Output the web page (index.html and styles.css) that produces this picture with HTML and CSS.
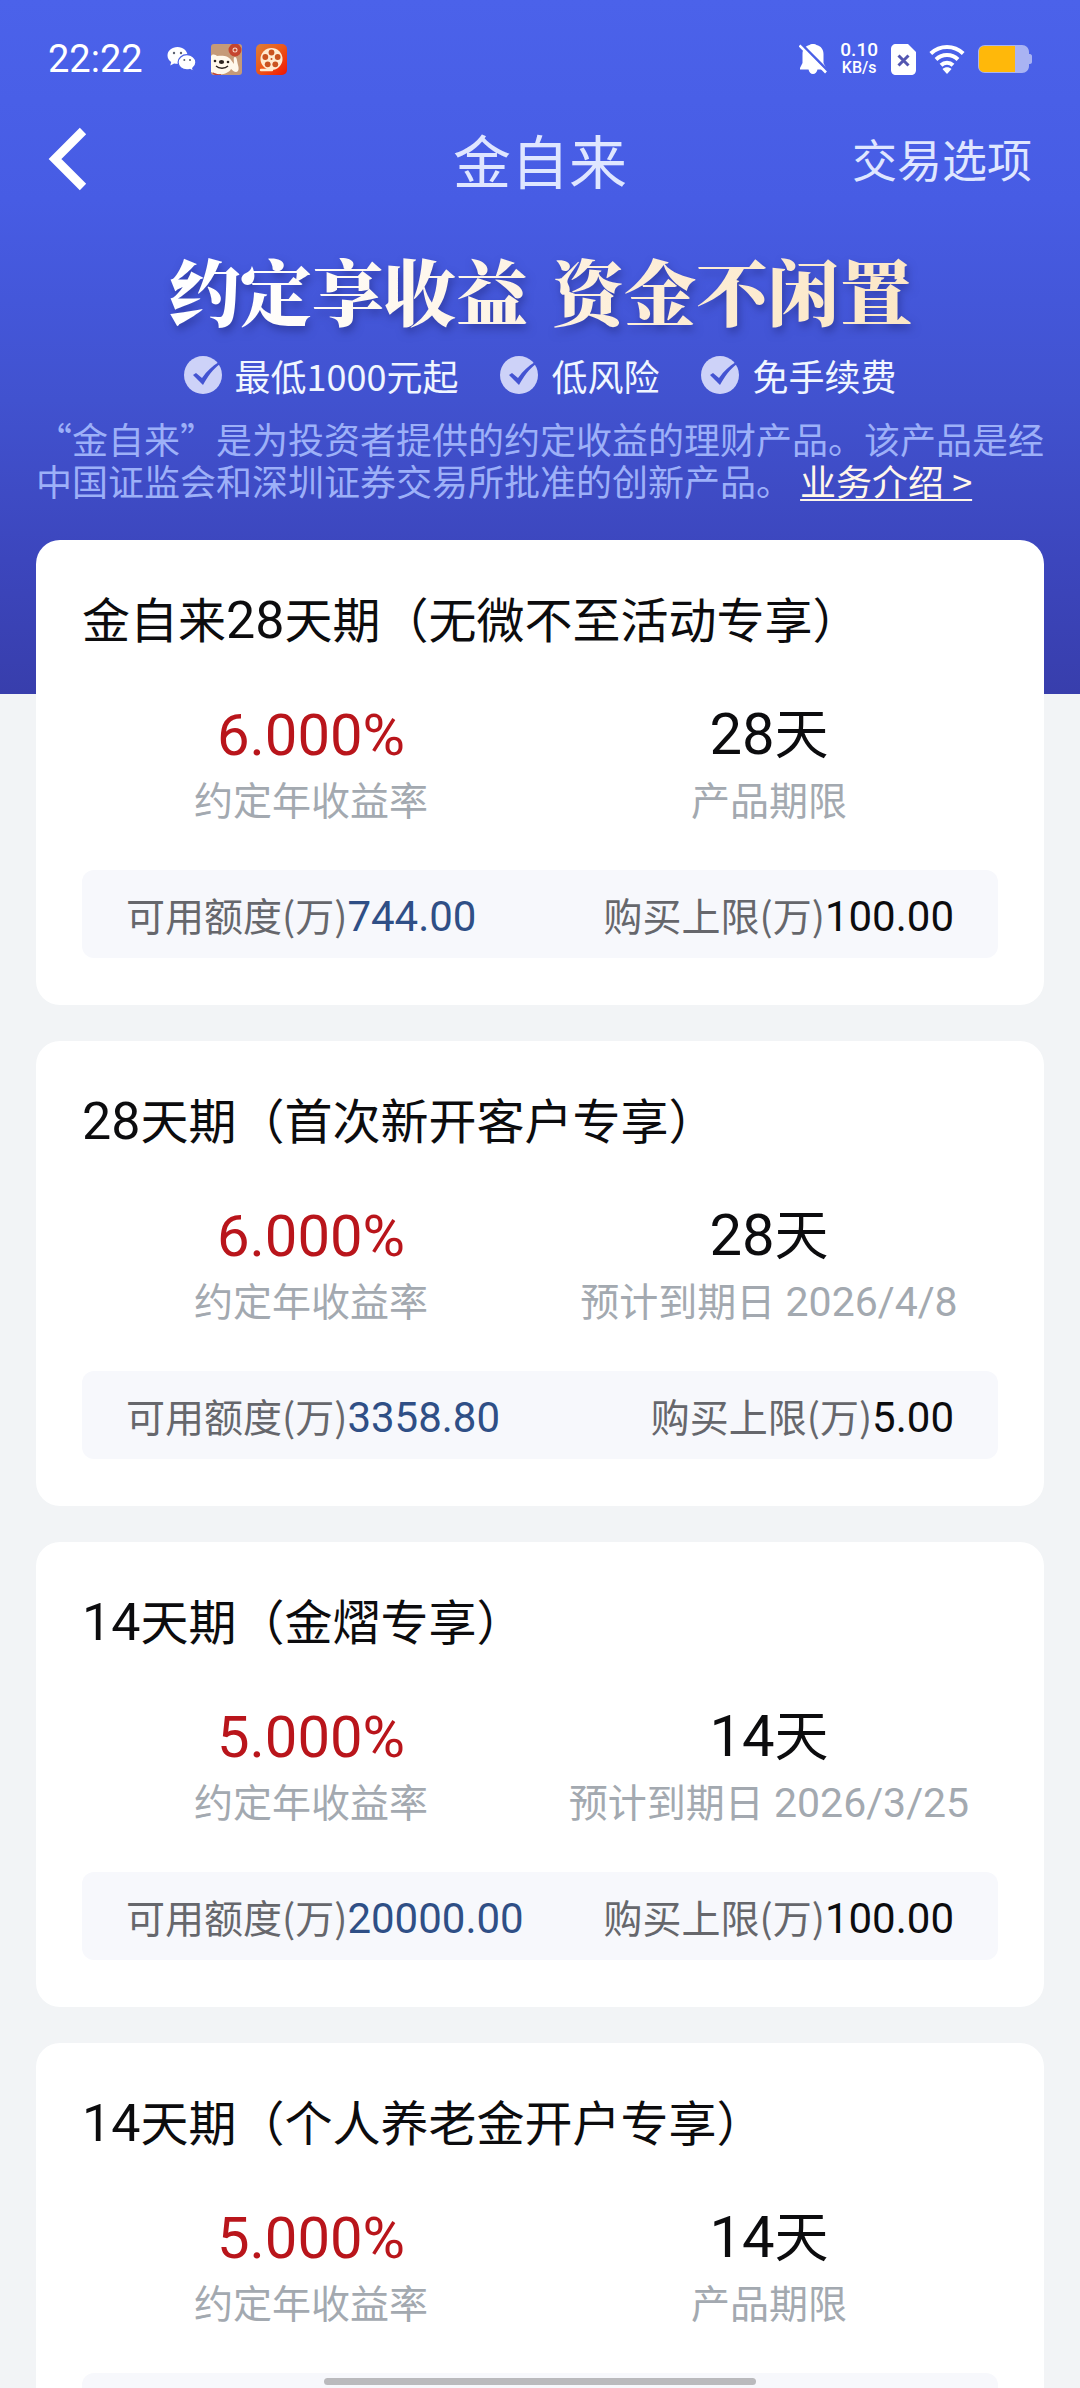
FILE: index.html
```html
<!DOCTYPE html>
<html lang="zh-CN">
<head>
<meta charset="utf-8">
<meta name="viewport" content="width=device-width, initial-scale=1">
<title>金自来</title>
<link rel="stylesheet" href="styles.css">
</head>
<body>
<div class="page">
  <div class="status">
    <span class="time">22:22</span>
    <div class="apps">
      <svg width="30" height="26" viewBox="0 0 30 26" aria-hidden="true">
        <path fill="#fff" d="M10.500 1C4.900 1 .5 4.700.5 9.400c0 2.700 1.500 5 3.700 6.500l-.9 3.600 3.800-2.100c1.100.3 2.200.4 3.400.4 5.600 0 10-3.800 10-8.400S16.100 1 10.500 1z"/>
        <path fill="#fff" stroke="#4a60e6" stroke-width="1.200" d="M20 8.700c-5 0-8.900 3.400-8.900 7.600s3.900 7.600 8.900 7.600c1 0 2-.1 2.900-.4l3.600 1.900-.8-3.100c2-1.400 3.200-3.600 3.200-6 0-4.200-3.900-7.600-8.900-7.600z"/>
        <g fill="#5c6270"><circle cx="7" cy="7" r="1.200"/><circle cx="14" cy="7" r="1.200"/><circle cx="17.300" cy="14" r="1"/><circle cx="23" cy="14" r="1"/></g>
      </svg>
      <svg width="31" height="31" viewBox="0 0 31 31" aria-hidden="true">
        <rect width="31" height="31" rx="3" fill="#c59a78"/>
        <path fill="#fff8ec" d="M0 12c2-3 5-1 6 0 6-1 12 0 14 4l3 4c0-4-1-7 1-7s2 4 3 8c1 3 1 7-2 7s-4-3-5-3c-2 4-8 6-14 5L0 28z"/>
        <g fill="#2a211e"><circle cx="4" cy="17" r="1.300"/><circle cx="17" cy="18" r="1.300"/><ellipse cx="10.500" cy="18" rx="2.600" ry="1.900"/></g>
        <path fill="none" stroke="#2a211e" stroke-width="1.300" d="M5 22c3 3 9 3 12 0"/>
        <path fill="none" stroke="#c0423a" stroke-width="1.500" d="M2 29c2 2 5 2 8 2"/>
        <circle cx="24" cy="6" r="4.500" fill="#fbd9c8" stroke="#c5452f" stroke-width="4"/>
        <circle cx="24" cy="6" r="1.500" fill="#c5452f"/>
      </svg>
      <svg width="31" height="31" viewBox="0 0 31 31" aria-hidden="true">
        <defs><linearGradient id="film" x1="0" y1="0" x2="1" y2="1"><stop offset="0" stop-color="#dd8038"/><stop offset=".5" stop-color="#ec5518"/><stop offset="1" stop-color="#f01404"/></linearGradient></defs>
        <rect width="31" height="31" rx="5" fill="url(#film)"/>
        <circle cx="15.500" cy="15" r="11" fill="#ffead0"/>
        <g fill="#c9521f"><circle cx="15.500" cy="8.500" r="2.900"/><circle cx="21.700" cy="13" r="2.900"/><circle cx="19.300" cy="20.300" r="2.900"/><circle cx="11.700" cy="20.300" r="2.900"/><circle cx="9.300" cy="13" r="2.900"/><circle cx="15.500" cy="15" r="1"/></g>
        <path d="M5 26h11" stroke="#ffead0" stroke-width="2.400" stroke-linecap="round"/>
      </svg>
    </div>
    <div class="system">
      <svg width="28" height="32" viewBox="0 0 28 32" aria-hidden="true">
        <path fill="#fff" d="M14 1c-1.700 0-2.700.4-3.500 1C6 3 3.500 6.500 3.500 11v9L1 25v1.500h8.500c.5 2.500 2.300 4.500 4.500 4.500s4-2 4.500-4.500H27V25l-2.500-5v-9c0-4.500-2.500-8-7-9-.8-.6-1.800-1-3.500-1z"/>
        <path stroke="#4a60e6" stroke-width="3" d="M2 1l27 27"/>
        <path stroke="#fff" stroke-width="2.600" d="M.5 2.500L27 29.500"/>
      </svg>
      <span class="speed"><span class="speed-value">0.10</span><span class="speed-unit">KB/s</span></span>
      <svg width="25" height="31" viewBox="0 0 25 31" aria-hidden="true">
        <path fill="#fff" d="M5 0h12l8 8v18c0 3-2 5-5 5H5c-3 0-5-2-5-5V5c0-3 2-5 5-5z"/>
        <path stroke="#5356b0" stroke-width="3" d="M7.500 11.500l10 10m0-10l-10 10"/>
      </svg>
      <svg width="36" height="30" viewBox="0 0 36 30" aria-hidden="true">
        <g fill="none" stroke="#fff" stroke-width="4"><path d="M1.800 9.500c9.300-8.700 23.100-8.700 32.400 0"/><path d="M7 15.500c6.200-5.900 15.800-5.900 22 0"/><path d="M12 21.200c3.400-3.300 8.600-3.300 12 0"/></g>
        <path fill="#fff" d="M18 30l-4.500-5c2.500-2.300 6.500-2.300 9 0z"/>
      </svg>
      <svg width="54" height="28" viewBox="0 0 54 28" aria-hidden="true">
        <path fill="#a9b3f3" d="M7 0h37c4 0 7 3 7 7v2h1c1 0 2 1 2 2v6c0 1-1 2-2 2h-1v2c0 4-3 7-7 7H7c-4 0-7-3-7-7V7c0-4 3-7 7-7z"/>
        <path fill="#ffb80a" d="M7 1h30v26H7c-4 0-6-2-6-6V7c0-4 2-6 6-6z"/>
      </svg>
    </div>
  </div>

  <header class="nav">
    <button class="back" type="button" aria-label="返回">
      <svg width="40" height="64" viewBox="0 0 40 64" aria-hidden="true"><path fill="none" stroke="#fff" stroke-width="9" d="M35 4L7 32l28 28"/></svg>
    </button>
    <h1 class="nav-title">金自来</h1>
    <button class="options" type="button">交易选项</button>
  </header>

  <section class="hero">
    <h2 class="slogan"><span>约定享收益</span> <span>资金不闲置</span></h2>
    <ul class="features">
      <li><svg width="38" height="38" viewBox="0 0 38 38" aria-hidden="true"><circle cx="19" cy="19" r="19" fill="#cdd2f8"/><path fill="#4454d2" d="M9 19l3-2 6 5C23 15 28 10 35 6l1 2c-7 5-12 12-17 21z"/></svg>最低1000元起</li>
      <li><svg width="38" height="38" viewBox="0 0 38 38" aria-hidden="true"><circle cx="19" cy="19" r="19" fill="#cdd2f8"/><path fill="#4454d2" d="M9 19l3-2 6 5C23 15 28 10 35 6l1 2c-7 5-12 12-17 21z"/></svg>低风险</li>
      <li><svg width="38" height="38" viewBox="0 0 38 38" aria-hidden="true"><circle cx="19" cy="19" r="19" fill="#cdd2f8"/><path fill="#4454d2" d="M9 19l3-2 6 5C23 15 28 10 35 6l1 2c-7 5-12 12-17 21z"/></svg>免手续费</li>
    </ul>
    <p class="intro">“金自来”是为投资者提供的约定收益的理财产品。该产品是经中国证监会和深圳证券交易所批准的创新产品。 <a href="#intro">业务介绍 &gt;</a></p>
  </section>

  <main class="products">
    <article class="card">
      <h3 class="name">金自来<span class="digits">28</span>天期（无微不至活动专享）</h3>
      <div class="facts">
        <div class="fact"><span class="rate">6.000%</span><span class="label">约定年收益率</span></div>
        <div class="fact"><span class="term"><span class="days">28</span>天</span><span class="label">产品期限</span></div>
      </div>
      <div class="quota"><span>可用额度(万)<b class="left">744.00</b></span><span>购买上限(万)<b>100.00</b></span></div>
    </article>
    <article class="card">
      <h3 class="name"><span class="digits">28</span>天期（首次新开客户专享）</h3>
      <div class="facts">
        <div class="fact"><span class="rate">6.000%</span><span class="label">约定年收益率</span></div>
        <div class="fact"><span class="term"><span class="days">28</span>天</span><span class="label">预计到期日<span class="date"> 2026/4/8</span></span></div>
      </div>
      <div class="quota"><span>可用额度(万)<b class="left">3358.80</b></span><span>购买上限(万)<b>5.00</b></span></div>
    </article>
    <article class="card">
      <h3 class="name"><span class="digits">14</span>天期（金熠专享）</h3>
      <div class="facts">
        <div class="fact"><span class="rate">5.000%</span><span class="label">约定年收益率</span></div>
        <div class="fact"><span class="term"><span class="days">14</span>天</span><span class="label">预计到期日<span class="date"> 2026/3/25</span></span></div>
      </div>
      <div class="quota"><span>可用额度(万)<b class="left">20000.00</b></span><span>购买上限(万)<b>100.00</b></span></div>
    </article>
    <article class="card">
      <h3 class="name"><span class="digits">14</span>天期（个人养老金开户专享）</h3>
      <div class="facts">
        <div class="fact"><span class="rate">5.000%</span><span class="label">约定年收益率</span></div>
        <div class="fact"><span class="term"><span class="days">14</span>天</span><span class="label">产品期限</span></div>
      </div>
      <div class="quota"></div>
    </article>
  </main>
</div>
<div class="home-bar"></div>
</body>
</html>
```
FILE: styles.css
```css
* { box-sizing: border-box; margin: 0; padding: 0; }

body {
  font-family: "Noto Sans CJK SC", sans-serif;
  color: #0c0c0e;
  overflow: hidden;
}

svg { display: block; flex: none; }

button { border: 0; background: none; font: inherit; color: inherit; cursor: pointer; }

.page {
  height: 100vh;
  overflow-y: auto;
  scrollbar-width: none;
  background:
    linear-gradient(180deg, #4b62ea 0, #475ce4 200px, #4152cf 400px, #3c46bd 560px, #383eac 694px) no-repeat 0 0 / 100% 694px,
    #f2f4f6;
}

/* status bar */
.status {
  display: flex;
  align-items: center;
  height: 118px;
  padding: 0 48px;
  color: #fff;
  font-family: Roboto, sans-serif;
}
.time { font-size: 38px; line-height: 40px; }
.apps { display: flex; align-items: center; gap: 14px; margin-left: 24px; }
.system { display: flex; align-items: center; gap: 13px; margin-left: auto; }
.speed { display: flex; flex-direction: column; align-items: center; font-weight: 500; line-height: 18px; }
.speed-value { font-size: 19px; }
.speed-unit { font-size: 16px; }

/* navigation */
.nav {
  display: grid;
  grid-template-columns: 1fr auto 1fr;
  align-items: center;
  height: 82px;
  padding: 0 48px;
  color: #dfe6ff;
}
.back { justify-self: start; }
.nav-title { font-size: 58px; font-weight: 400; line-height: 80px; }
.options { justify-self: end; font-size: 45px; line-height: 64px; }

/* banner */
.hero { padding: 47px 36px 39px; }
.slogan {
  display: flex;
  justify-content: center;
  gap: 24px;
  font-family: "Noto Serif CJK SC", "Noto Sans CJK SC", serif;
  font-size: 72px;
  font-weight: 900;
  line-height: 84px;
  color: transparent;
  background: linear-gradient(100deg, #fff 20%, #fdeed8 60%, #fbe6c4 90%);
  -webkit-background-clip: text;
  background-clip: text;
  filter: drop-shadow(2px 5px 4px rgba(30, 38, 120, .5));
}
.features {
  display: flex;
  justify-content: center;
  gap: 42px;
  margin-top: 24px;
  list-style: none;
  color: #f0f6ff;
  font-size: 36px;
  line-height: 40px;
}
.features li { display: flex; align-items: center; gap: 13px; }
.intro { margin-top: 22px; color: #9db0f8; font-size: 36px; line-height: 42px; }
.intro a { color: #fff6ea; text-decoration-thickness: 2px; text-underline-offset: 3px; }

/* product cards */
.products { display: flex; flex-direction: column; gap: 36px; padding: 0 36px 36px; }
.card { padding: 47px 46px; border-radius: 24px; background: #fff; }
.name { height: 60px; font-size: 48px; font-weight: 400; line-height: 60px; }
.digits, .days, .date, .quota b { font-family: Roboto, sans-serif; line-height: 1; }
.digits { font-size: 52px; }
.facts { display: grid; grid-template-columns: 1fr 1fr; margin: 56px 0 50px; }
.fact { display: flex; flex-direction: column; align-items: center; gap: 9px; }
.rate { color: #b9151b; font-family: Roboto, sans-serif; font-size: 58px; line-height: 64px; }
.term { height: 64px; font-size: 54px; line-height: 56px; }
.days { font-size: 58px; }
.label { height: 44px; color: #a3a9b0; font-size: 39px; line-height: 44px; }
.date { font-size: 41px; }
.quota {
  display: flex;
  align-items: center;
  justify-content: space-between;
  height: 88px;
  padding: 0 44px;
  border-radius: 12px;
  background: #f7f8fc;
  color: #66676c;
  font-size: 39px;
  line-height: 56px;
}
.quota b { color: #0c0c0e; font-size: 42px; font-weight: 400; }
.quota .left { color: #2f4f86; }

/* gesture bar */
.home-bar {
  position: fixed;
  bottom: 3px;
  left: 30%;
  width: 40%;
  height: 7px;
  border-radius: 4px;
  background: #bababd;
}
```
